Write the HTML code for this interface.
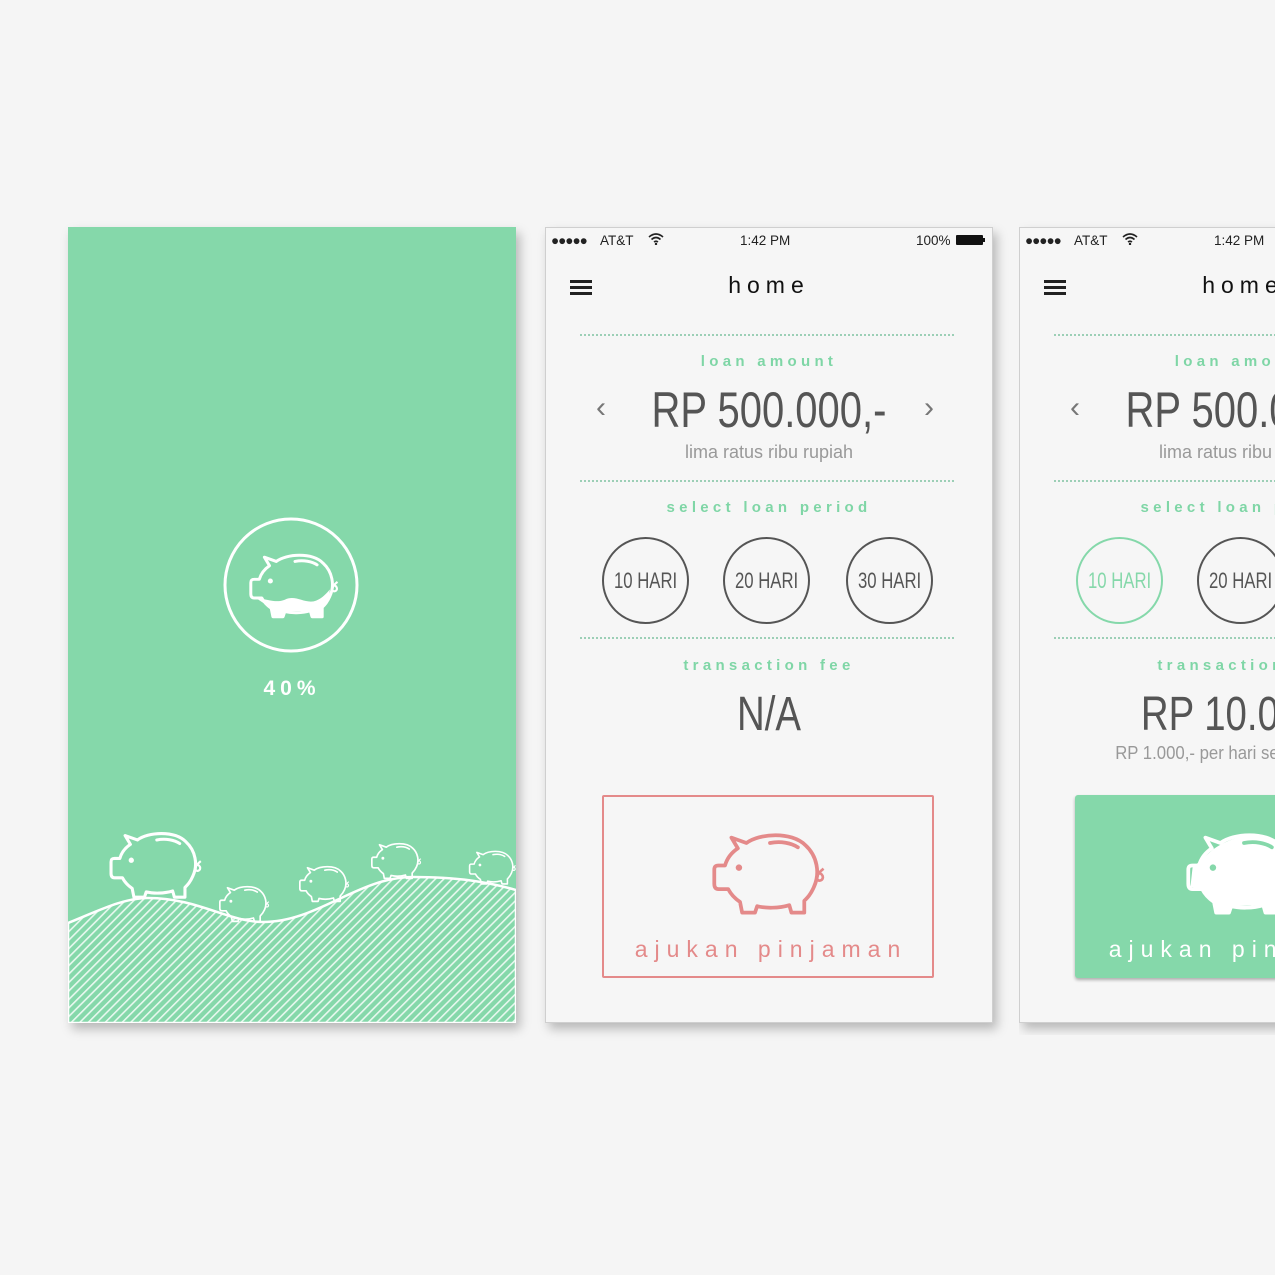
<!DOCTYPE html>
<html><head><meta charset="utf-8"><style>
*{margin:0;padding:0;box-sizing:border-box}
body{width:1275px;height:1275px;background:#f5f5f5;position:relative;overflow:hidden;font-family:"Liberation Sans",sans-serif}
.a{position:absolute}
.scr{position:absolute;top:227px;width:448px;height:796px;box-shadow:4px 6px 10px rgba(0,0,0,.25)}
.ph{background:#f6f6f6;border:1px solid #cfcfcf;overflow:hidden}
.c{position:absolute;left:0;width:446px;text-align:center;white-space:nowrap}
.lbl{color:#7fd6a6;font-size:15px;letter-spacing:4.3px;font-weight:bold}
.dot{position:absolute;left:34px;width:374px;border-top:2px dotted #9ccfb6}
.nar{color:#555;transform:scaleX(.8);transform-origin:223px 0}
.circ{position:absolute;width:87px;height:87px;border-radius:50%;border:2px solid #555;color:#555;text-align:center;line-height:83px;overflow:hidden}
.circ span{display:inline-block;font-size:22px;transform:scaleX(.76);white-space:nowrap}
.sb{position:absolute;top:5px;font-size:13.5px;color:#222}
</style></head><body>
<svg width="0" height="0" style="position:absolute">
<defs>
<g id="pig">
<path d="M30,22 L24,12 L38,17 C50,8 80,6 93,19 C104,29 107,45 101,58 C98,65 95,68 92,71 L92,82 L80,82 L78,75 C68,78 56,78 48,76 L46,82 L34,82 L32,72 C26,68 23,64 21,60 L12,60 C9,60 8,58 8,55 L8,42 C8,39 9,38 12,38 L18,38 C20,31 24,26 30,22 Z" fill="none" stroke-width="3.5" stroke-linejoin="round"/>
<circle cx="31" cy="40" r="3" stroke="none"/>
<path d="M60,17 C70,15 80,17 86,21" fill="none" stroke-width="3.5" stroke-linecap="round"/>
<path d="M103,45 C110,44 111,51 107,52 C103,53 102,47 110,41" fill="none" stroke-width="2.5"/>
</g>
<pattern id="hat" width="6" height="6" patternUnits="userSpaceOnUse" patternTransform="rotate(45)">
<rect width="6" height="6" fill="#85d8aa"/><rect width="1.6" height="6" fill="#e8f8ef"/>
</pattern>
</defs></svg>

<!-- screen 1 -->
<div class="scr" style="left:68px;background:#85d8aa;overflow:hidden">
<svg width="448" height="796" style="position:absolute;left:0;top:0">
<circle cx="223" cy="358" r="66" fill="none" stroke="#fff" stroke-width="3"/>
<g transform="translate(176,320) scale(0.85)" fill="#fff" stroke="#fff">
<use href="#pig"/>
<path d="M14,60 C30,62 38,66 48,62 C60,56 70,66 82,64 C90,62 96,56 101,50 L100,60 L92,72 L92,82 L80,82 L78,75 L48,76 L46,82 L34,82 L32,72 Z" stroke="none"/>
</g>
<path d="M0,696 C30,684 55,671 80,671 C130,671 160,695 195,695 C250,695 290,650 345,650 C390,650 420,655 448,663 L448,796 L0,796 Z" fill="url(#hat)" stroke="#fff" stroke-width="2.5"/>
<g stroke="#fff" fill="#fff">
<use href="#pig" transform="translate(36,598) scale(0.88)"/>
<use href="#pig" transform="translate(148,655) scale(0.48)"/>
<use href="#pig" transform="translate(228,635) scale(0.48)"/>
<use href="#pig" transform="translate(300,612) scale(0.48)"/>
<use href="#pig" transform="translate(398,620) scale(0.45)"/>
</g>
</svg>
<div class="a" style="left:0;width:448px;top:450px;text-align:center;color:#fff;font-weight:bold;font-size:21px;letter-spacing:5px">40%</div>
</div>

<!-- screen 2 -->
<div class="scr ph" style="left:545px">
<div class="sb" style="left:5px;letter-spacing:-1px">●●●●●</div>
<div class="sb" style="left:54px">AT&amp;T</div>
<svg class="a" style="left:102px;top:5px" width="16" height="12" viewBox="0 0 16 12"><path d="M1,4 Q8,-2 15,4 M3.5,6.5 Q8,2.5 12.5,6.5 M6,9 Q8,7.5 10,9" stroke="#222" stroke-width="1.6" fill="none"/><circle cx="8" cy="11" r="1.2" fill="#222"/></svg>
<div class="sb" style="left:194px">1:42 PM</div>
<div class="sb" style="left:370px">100%</div>
<div class="a" style="left:410px;top:7px;width:27px;height:10px;background:#111;border-radius:1px"></div>
<div class="a" style="left:437px;top:10px;width:2px;height:4px;background:#111"></div>
<div class="a" style="left:24px;top:52px;width:22px;height:2.5px;background:#222;box-shadow:0 6px 0 #222,0 12px 0 #222"></div>
<div class="c" style="top:44px;font-size:23px;letter-spacing:6px;color:#111">home</div>
<div class="dot" style="top:106px"></div>
<div class="c lbl" style="top:125px">loan amount</div>
<div class="a" style="left:50px;top:163px;font-size:30px;color:#777">&#8249;</div>
<div class="a" style="left:378px;top:163px;font-size:30px;color:#777">&#8250;</div>
<div class="c nar" style="top:153px;font-size:50px">RP 500.000,-</div>
<div class="c" style="top:214px;font-size:18px;color:#999">lima ratus ribu rupiah</div>
<div class="dot" style="top:252px"></div>
<div class="c lbl" style="top:271px">select loan period</div>
<div class="circ" style="left:56px;top:309px"><span>10 HARI</span></div>
<div class="circ" style="left:177px;top:309px"><span>20 HARI</span></div>
<div class="circ" style="left:300px;top:309px"><span>30 HARI</span></div>
<div class="dot" style="top:409px"></div>
<div class="c lbl" style="top:429px">transaction fee</div>
<div class="c nar" style="top:459px;font-size:48px">N/A</div>
<div class="a" style="left:56px;top:567px;width:332px;height:183px;border:2px solid #e48a8a;border-radius:2px"></div>
<svg class="a" style="left:164px;top:598px" width="120" height="94" viewBox="4 4 112 82"><g stroke="#e48a8a" fill="#e48a8a"><use href="#pig"/></g></svg>
<div class="c" style="top:708px;left:2px;font-size:23px;letter-spacing:7px;color:#e48a8a">ajukan pinjaman</div>
</div>

<!-- screen 3 -->
<div class="a" style="left:1019px;top:220px;width:256px;height:815px;overflow:hidden">
<div class="scr ph" style="left:0;top:7px">
<div class="sb" style="left:5px;letter-spacing:-1px">●●●●●</div>
<div class="sb" style="left:54px">AT&amp;T</div>
<svg class="a" style="left:102px;top:5px" width="16" height="12" viewBox="0 0 16 12"><path d="M1,4 Q8,-2 15,4 M3.5,6.5 Q8,2.5 12.5,6.5 M6,9 Q8,7.5 10,9" stroke="#222" stroke-width="1.6" fill="none"/><circle cx="8" cy="11" r="1.2" fill="#222"/></svg>
<div class="sb" style="left:194px">1:42 PM</div>
<div class="a" style="left:24px;top:52px;width:22px;height:2.5px;background:#222;box-shadow:0 6px 0 #222,0 12px 0 #222"></div>
<div class="c" style="top:44px;font-size:23px;letter-spacing:6px;color:#111">home</div>
<div class="dot" style="top:106px"></div>
<div class="c lbl" style="top:125px">loan amount</div>
<div class="a" style="left:50px;top:163px;font-size:30px;color:#777">&#8249;</div>
<div class="c nar" style="top:153px;font-size:50px">RP 500.000,-</div>
<div class="c" style="top:214px;font-size:18px;color:#999">lima ratus ribu rupiah</div>
<div class="dot" style="top:252px"></div>
<div class="c lbl" style="top:271px">select loan period</div>
<div class="circ" style="left:56px;top:309px;border-color:#85d8aa;color:#85d8aa"><span>10 HARI</span></div>
<div class="circ" style="left:177px;top:309px"><span>20 HARI</span></div>
<div class="dot" style="top:409px"></div>
<div class="c lbl" style="top:429px">transaction fee</div>
<div class="c nar" style="top:459px;font-size:48px">RP 10.000,-</div>
<div class="c" style="top:515px;font-size:18px;color:#999;transform:scaleX(.93);transform-origin:223px 0">RP 1.000,- per hari selama 10 hari</div>
<div class="a" style="left:55px;top:567px;width:340px;height:183px;background:#85d8aa;border-radius:3px;box-shadow:0 2px 3px rgba(0,0,0,.3)"></div>
<svg class="a" style="left:164px;top:598px" width="120" height="94" viewBox="4 4 112 82"><g stroke="#fff" fill="#fff"><use href="#pig"/><path d="M12,40 L30,24 C50,8 80,6 93,19 C104,29 107,45 101,58 L92,72 L92,82 L80,82 L78,75 L48,76 L46,82 L34,82 L32,72 L21,60 L10,58 Z" stroke="none"/><circle cx="31" cy="40" r="3" fill="#85d8aa" stroke="none"/><path d="M60,17 C70,15 80,17 86,21" fill="none" stroke="#85d8aa" stroke-width="3.5" stroke-linecap="round"/></g></svg>
<div class="c" style="top:708px;left:2px;font-size:23px;letter-spacing:7px;color:#fff">ajukan pinjaman</div>
</div>
</div>
</body></html>
